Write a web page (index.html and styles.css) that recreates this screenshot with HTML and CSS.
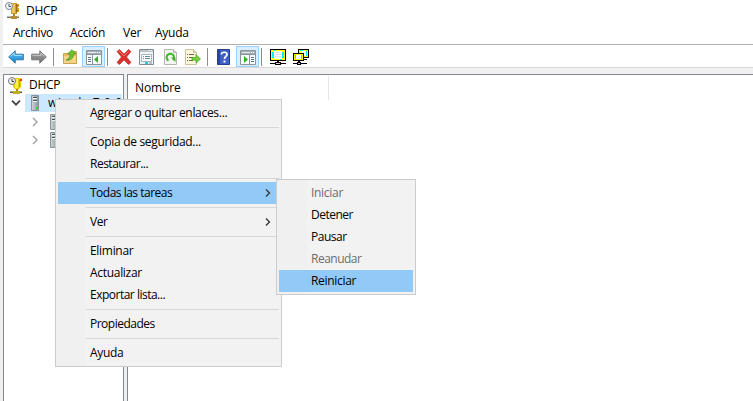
FILE: index.html
```
<!DOCTYPE html>
<html lang="es">
<head>
<meta charset="utf-8">
<title>DHCP</title>
<link rel="stylesheet" href="styles.css">
</head>
<body>
<svg class="defs" width="0" height="0">
  <defs>
    <symbol id="dhcp" viewBox="0 0 16 17">
      <path d="M6 1h6v1h2v3h-1v1h1v4h-2v2H6z" fill="#dd9c20"/>
      <path d="M7 2h3v9H7z" fill="#f0c658"/>
      <path d="M11 2h1v9h-1z" fill="#94701c"/>
      <path d="M12 3h1v1h-1zM12 8h1v1h-1z" fill="#b84616"/>
      <path d="M8 12h2v3H8z" fill="#b58324"/>
      <path d="M2 14.500h12v1.500H2z" fill="#77786b"/><path d="M6 14h6v3H6z" fill="#bb8c31"/>
      <circle cx="4" cy="4" r="3.500" fill="#edf3f6" stroke="#858b91"/>
      <path d="M4 2v2.500h2" fill="none" stroke="#4a535c"/>
    </symbol>
    <symbol id="tree-dhcp" viewBox="0 0 16 17">
      <path d="M5 1h8v9l-3 3H8l-3-3z" fill="#e9c900"/>
      <path d="M7 2h3v9H7z" fill="#fff052"/>
      <path d="M11 3h1v7h-1z" fill="#c6a000"/>
      <path d="M12 2h2v2h-2z" fill="#f02b18"/>
      <path d="M8 12h2v3H8z" fill="#aa8e15"/><path d="M2 14.500h12v1.500H2z" fill="#555a50"/><path d="M5 14h7v3H5z" fill="#c3aa27"/>
      <circle cx="4" cy="4" r="3.500" fill="#f1f3f3" stroke="#737679"/>
      <path d="M4 2v2.500h2" fill="none" stroke="#333"/>
    </symbol>
    <linearGradient id="metal"><stop stop-color="#d3d8da"/><stop offset="1" stop-color="#84939a"/></linearGradient>
    <linearGradient id="blue" x2="0" y2="1"><stop stop-color="#65c8fa"/><stop offset="1" stop-color="#127fca"/></linearGradient>
    <linearGradient id="gray" x2="0" y2="1"><stop stop-color="#aaa"/><stop offset="1" stop-color="#707070"/></linearGradient>
    <symbol id="server" viewBox="0 0 8 16">
      <path d="M.5.5h7v15h-7z" fill="url(#metal)" stroke="#87949a"/>
      <path d="M2 2.500h4M2 5.500h4" stroke="#48555b"/><path d="M2 3.500h4M2 6.500h4" stroke="#f2f5f6"/>
      <path d="M5 12h2v2H5z" fill="#37d92d"/>
    </symbol>
    <symbol id="pane" viewBox="0 0 16 15">
      <path d="M.5.5h15v14H.5z" fill="#f8fbfd" stroke="#8b949c"/>
      <path d="M1 1h14v3H1z" fill="#a4b0ba"/><path d="M2 2h8v1H2z" fill="#e2e8ec"/><path d="M11 2h1v1h-1zM13 2h1v1h-1z" fill="#fff"/>
      <path d="M1 4.500h14" stroke="#8b949c"/>
    </symbol>
  </defs>
</svg>
<div class="window">
  <header class="title"><svg class="app"><use href="#dhcp"/></svg><span>DHCP</span></header>
  <nav class="menubar"><span class="m1">Archivo</span><span class="m2">Acción</span><span class="m3">Ver</span><span class="m4">Ayuda</span></nav>
  <div class="toolbar">
    <span class="tool back"><svg width="16" height="14" viewBox="0 0 16 14"><path d="M.7 7 7.200.8v3.400h8.100v5.600H7.200v3.400z" fill="url(#blue)" stroke="#2878ae"/><path d="M2.500 6.500 6 3v2.400h8" fill="none" stroke="#a1e2ff"/></svg></span>
    <span class="tool forward"><svg width="16" height="14" viewBox="0 0 16 14"><path d="M15.300 7 8.800.8v3.400H.7v5.600h8.100v3.400z" fill="url(#gray)" stroke="#777"/><path d="M1.500 5.400H10V3l3.500 3.500" fill="none" stroke="#c5c5c5"/></svg></span>
    <i class="divider d1"></i>
    <span class="tool folder"><svg width="15" height="16" viewBox="0 0 15 16"><path d="M.5 4.500h6l1-2h6v12H.5z" fill="#e8bf66" stroke="#c9a254"/><path d="M1 7h12v7H1z" fill="#f3d48a"/><path d="M3 11c3-1 4-3 4-6H4.500L9 .7 13 5h-2.500c0 4-3 7-7.500 6z" fill="#6ac52e" stroke="#43911d" stroke-width=".7"/></svg></span>
    <span class="tool active a1"><svg width="16" height="15" viewBox="0 0 16 15"><use href="#pane"/><path d="M6.500 5v9" stroke="#8b949c"/><path d="M2 7.500h3M2 9.500h3M2 11.500h3" stroke="#59778f"/><path d="M12 6v7L8 9.500z" fill="#36ad27"/></svg></span>
    <i class="divider d2"></i>
    <span class="tool delete"><svg width="16" height="16" viewBox="0 0 16 16"><path d="M1 2.500 3.500.500 8 5 12.500.500 15 2.500 10.500 8 15 13.500 12.500 15.500 8 11 3.500 15.500 1 13.500 5.500 8z" fill="#dc302c" stroke="#c0443f" stroke-width=".8"/><path d="m3 2 5 5 4.500-4.500" fill="none" stroke="#f07972"/></svg></span>
    <span class="tool props"><svg width="15" height="16" viewBox="0 0 15 16"><path d="M.5.5h14v15H.5z" fill="#f0f3f5" stroke="#7e8b95"/><path d="M1 1h13v2H1z" fill="#b9c4cb"/><path d="M10 1h1v1h-1zM12 1h1v1h-1z" fill="#fff"/><path d="M2.500 5.500h10v7h-10z" fill="#fff" stroke="#a5b5bf"/><path d="M4 7.500h1m1 0h5M4 9.500h1m1 0h5" stroke="#6c899b"/><path d="M6 13h3v2H6z" fill="#36bde0"/><path d="M10 13h3v2h-3z" fill="#b2c4cb"/></svg></span>
    <span class="tool refresh"><svg width="13" height="16" viewBox="0 0 13 16"><path d="M.5.500h9l3 3v12H.500z" fill="#f4f3ef" stroke="#b5b4ad"/><path d="M9.500.500v3h3" fill="#ddd" stroke="#b5b4ad"/><path d="M4.500 11.700A3.700 3.700 0 1 1 9 11" fill="none" stroke="#3db528" stroke-width="2"/><path d="M7 8.500h4.500v4.500z" fill="#3db528"/></svg></span>
    <span class="tool export"><svg width="16" height="16" viewBox="0 0 16 16"><path d="M.5.500h8l3 3v12H.500z" fill="#fff8d9" stroke="#c9c1a0"/><path d="M8.500.500v3h3" fill="#e1d8ae" stroke="#c9c1a0"/><path d="M2 5.500h1m1 0h5M2 8.500h1m1 0h4M2 11.500h1m1 0h4" stroke="#68665a"/><path d="M7 8.500h4v-3l4.500 4.500-4.500 4v-3H7z" fill="#73d43d" stroke="#4ba827" stroke-width=".8"/></svg></span>
    <i class="divider d3"></i>
    <span class="tool help"><svg width="13" height="16" viewBox="0 0 13 16"><path d="M.5.500h12v15H.500z" fill="#3f61c3" stroke="#26408d"/><path d="M1 1h2v14H1z" fill="#28489d"/><path d="M4.500 5.500C4.500 2.500 10 2.500 10 5.500 10 7.500 7.500 7.500 7.500 10" fill="none" stroke="#fff" stroke-width="1.700"/><path d="M6.500 11.500h2v2h-2z" fill="#fff"/></svg></span>
    <span class="tool active a2"><svg width="16" height="15" viewBox="0 0 16 15"><use href="#pane"/><path d="M9.500 5v9" stroke="#8b949c"/><path d="M11 7.500h3M11 9.500h3M11 11.500h3" stroke="#59778f"/><path d="M4 6v7l4-3.500z" fill="#36ad27"/></svg></span>
    <i class="divider d4"></i>
    <span class="tool monitor"><svg width="16" height="16" viewBox="0 0 16 16" shape-rendering="crispEdges">
      <path d="M0 0h16v12H0z"/><path d="M1 1h14v10H1z" fill="#ff0"/><path d="M2 3h2v6H2zM12 3h2v6h-2zM4 1h2v1H4zM10 10h2v1h-2z" fill="#00f0f0"/><path d="M4 2h8v8H4z" fill="#fff"/><path d="M5 3h6v1H5zM5 5h6v1H5zM5 7h6v1H5z" fill="#dce6ea"/>
      <path d="M7 12h2v1H7zM0 14h5v1H0zM11 14h5v1h-5zM5 13h6v3H5z"/><path d="M6 14h4v1H6z" fill="#ccc"/></svg></span>
    <span class="tool monitors"><svg width="16" height="16" viewBox="0 0 16 16" shape-rendering="crispEdges">
      <path d="M5 0h11v9H5z"/><path d="M6 1h9v7H6z" fill="#ff0"/><path d="M13 2h1v5h-1zM7 1h3v1H7z" fill="#00f0f0"/><path d="M8 2h5v5H8z" fill="#fff"/>
      <path d="M0 4h11v8H0z"/><path d="M1 5h9v6H1z" fill="#ff0"/><path d="M2 6h1v4H2zM8 6h1v4H8z" fill="#00f0f0"/><path d="M3 6h5v4H3z" fill="#fff"/>
      <path d="M5 12h2v1H5zM0 14h14v1H0zM4 13h4v3H4zM11 10h3v1h-3z"/><path d="M5 14h2v1H5z" fill="#ccc"/></svg></span>
  </div>
  <main class="content">
    <section class="tree">
      <div class="row root"><svg class="app"><use href="#tree-dhcp"/></svg><span>DHCP</span></div>
      <div class="row selected-row"><svg class="open" width="10" height="6" viewBox="0 0 10 6"><path d="m1 .7 4 4 4-4" fill="none" stroke="#404040" stroke-width="1.700"/></svg><div class="selected"><svg class="server"><use href="#server"/></svg><span>win-dc-7.0.0</span></div></div>
      <div class="row child"><svg width="6" height="10" viewBox="0 0 6 10"><path d="m1 1 4 4-4 4" fill="none" stroke="#a6a6a6" stroke-width="1.500"/></svg><svg class="server"><use href="#server"/></svg></div>
      <div class="row child"><svg width="6" height="10" viewBox="0 0 6 10"><path d="m1 1 4 4-4 4" fill="none" stroke="#a6a6a6" stroke-width="1.500"/></svg><svg class="server"><use href="#server"/></svg></div>
    </section>
    <section class="list"><div class="column">Nombre</div></section>
  </main>
</div>
<div class="menu context">
  <div class="item"><span>Agregar o quitar enlaces...</span></div>
  <hr>
  <div class="item"><span>Copia de seguridad...</span></div>
  <div class="item tight"><span>Restaurar...</span></div>
  <hr>
  <div class="item tight highlighted"><span>Todas las tareas</span><svg width="6" height="8" viewBox="0 0 6 8"><path d="m1 .5 3.500 3.500L1 7.500" fill="none" stroke="#333" stroke-width="1.300"/></svg></div>
  <hr>
  <div class="item tight"><span>Ver</span><svg width="6" height="8" viewBox="0 0 6 8"><path d="m1 .5 3.500 3.500L1 7.500" fill="none" stroke="#333" stroke-width="1.300"/></svg></div>
  <hr>
  <div class="item"><span>Eliminar</span></div>
  <div class="item"><span>Actualizar</span></div>
  <div class="item tight"><span>Exportar lista...</span></div>
  <hr>
  <div class="item tight"><span>Propiedades</span></div>
  <hr>
  <div class="item"><span>Ayuda</span></div>
</div>
<div class="menu submenu">
  <div class="item disabled"><span>Iniciar</span></div>
  <div class="item tight"><span>Detener</span></div>
  <div class="item tight"><span>Pausar</span></div>
  <div class="item tight disabled"><span>Reanudar</span></div>
  <div class="item highlighted"><span>Reiniciar</span></div>
</div>
</body>
</html>
```
FILE: styles.css
```
* { box-sizing: border-box; }
body { margin: 0; width: 753px; height: 401px; overflow: hidden; background: #f0f0f0; color: #000; font: 12px/18px "Open Sans", "Noto Sans", sans-serif; letter-spacing: -.25px; }
svg { display: block; flex: none; }
.defs { position: absolute; }
.window { height: 401px; padding-left: 3px; display: flex; flex-direction: column; }
.title { height: 22px; background: #fff; display: flex; align-items: center; padding-left: 2px; gap: 5px; flex: none; }
.app { width: 16px; height: 17px; }
.title .app { margin-bottom: 2px; }
.menubar { height: 22px; background: #fff; display: flex; align-items: center; padding-left: 10px; flex: none; }
.m1 { width: 57px; } .m2 { width: 53px; } .m3 { width: 32px; }
.toolbar { height: 24px; flex: none; background: #fff; border-top: 1px solid #b0b0b0; border-bottom: 1px solid #d9d9d9; display: flex; align-items: center; padding: 1px 0 0 5px; }
.tool { display: flex; align-items: center; justify-content: center; flex: none; }
.divider { width: 1px; height: 18px; background: #8d8d8d; flex: none; }
.forward { margin-left: 7px; }
.d1 { margin-left: 6px; }
.folder { margin-left: 9px; }
.active { width: 23px; height: 21px; background: #d9eeff; border: 1px solid #99d1ff; }
.active svg { margin-top: 2px; }
.a1 { margin-left: 4px; }
.d2 { margin-left: 2px; }
.delete { margin-left: 8px; }
.props { margin-left: 7px; }
.refresh { margin-left: 10px; }
.export { margin-left: 8px; }
.d3 { margin-left: 6px; }
.help { margin-left: 9px; }
.a2 { margin-left: 6px; }
.d4 { margin-left: 2px; }
.monitor { margin-left: 8px; }
.monitors { margin-left: 7px; }
.content { flex: 1; display: flex; gap: 3px; padding-top: 6px; }
.tree { width: 121px; border: 1px solid #828790; border-bottom: 0; background: #fff; padding: 1px 1px 0 0; }
.list { flex: 1; border: 1px solid #828790; border-width: 1px 0 0 1px; background: #fff; }
.row { height: 18px; display: flex; align-items: center; }
.root { padding-left: 4px; gap: 5px; }
.selected-row { padding-left: 7px; gap: 4px; }
.selected { flex: 1; height: 18px; background: #cce8ff; display: flex; align-items: center; padding-left: 6px; gap: 9px; white-space: nowrap; overflow: hidden; letter-spacing: .6px; }
.server { width: 8px; height: 16px; }
.child { padding: 2px 0 0 28px; gap: 12px; }
.column { width: 201px; height: 24px; margin-top: 1px; border-right: 1px solid #e5e5e5; padding: 3px 0 0 7px; letter-spacing: -.1px; }
.menu { position: absolute; border: 1px solid #ccc; padding: 2px; background: linear-gradient(90deg, #f0f0f0 30px, #f2f2f2 30px); }
.context { left: 55px; top: 99px; width: 227px; height: 268px; }
.submenu { left: 276px; top: 179px; width: 140px; height: 116px; }
.item { height: 22px; padding: 0 8px 0 32px; display: flex; align-items: center; justify-content: space-between; white-space: nowrap; letter-spacing: -.3px; }
.tight { letter-spacing: -.5px; }
.highlighted { background: #91c9f7; }
.disabled { color: #6d6d6d; }
hr { margin: 3px 0 3px 28px; border: 0; height: 1px; background: #d7d7d7; }
```
